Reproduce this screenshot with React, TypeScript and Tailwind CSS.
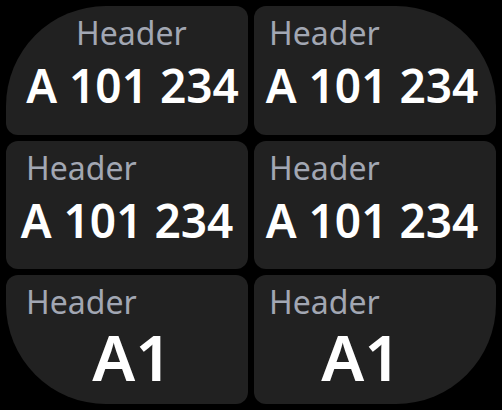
import React from 'react';

interface Tile {
  header: string;
  value: string;
  shape: string;
  headerPad: string;
  valuePad: string;
  big?: boolean;
}

const tiles: Tile[] = [
  { header: 'Header', value: 'A 101 234', shape: 'rounded-tl-[100px]', headerPad: 'pl-[70px]', valuePad: 'pl-[11px]' },
  { header: 'Header', value: 'A 101 234', shape: 'rounded-tr-[100px]', headerPad: 'pl-[15px]', valuePad: 'pr-[6px]' },
  { header: 'Header', value: 'A 101 234', shape: '', headerPad: 'pl-[20px]', valuePad: '' },
  { header: 'Header', value: 'A 101 234', shape: '', headerPad: 'pl-[15px]', valuePad: 'pr-[6px]' },
  { header: 'Header', value: 'A1', shape: 'rounded-bl-[100px]', headerPad: 'pl-[20px]', valuePad: 'pl-[10px]', big: true },
  { header: 'Header', value: 'A1', shape: 'rounded-br-[100px]', headerPad: 'pl-[15px]', valuePad: 'pr-[28px]', big: true },
];

function Card({ tile }: { tile: Tile }) {
  return (
    <div className={`flex flex-col rounded-xl bg-[#212121] pt-[11px] ${tile.shape}`}>
      <div className={`text-[32px] leading-none text-[#a2a7b3] ${tile.headerPad}`}>{tile.header}</div>
      <div
        className={`text-center font-semibold leading-none text-white whitespace-nowrap ${tile.valuePad} ${
          tile.big ? 'mt-[7px] text-[64px]' : 'mt-[13px] text-[46px]'
        }`}
      >
        {tile.value}
      </div>
    </div>
  );
}

export default function App() {
  return (
    <div
      className="grid h-[410px] w-[502px] grid-cols-2 grid-rows-3 gap-[6px] bg-black p-[6px]"
      style={{ fontFamily: '"Noto Sans", "Open Sans", sans-serif' }}
    >
      {tiles.map((t, i) => (
        <Card key={i} tile={t} />
      ))}
    </div>
  );
}
